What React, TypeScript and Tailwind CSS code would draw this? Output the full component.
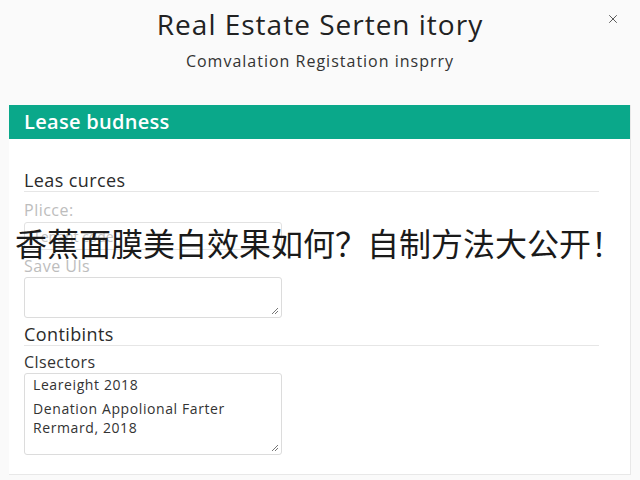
import { X } from "lucide-react";

const sans = { fontFamily: '"Open Sans", "Noto Sans", sans-serif' };

function SectionTitle({ children }: { children: React.ReactNode }) {
  return (
    <div className="mr-[16px] border-b border-[#e6e6e6] text-[18px] leading-[22px] tracking-[0.4px] text-[#2b2b2b]">
      {children}
    </div>
  );
}

function Textarea({ lines, height }: { lines?: string[][]; height: number }) {
  return (
    <div
      className="relative w-[258px] rounded-[3px] border border-[#dcdcdc] bg-white px-[8px] pt-[1px] text-[14px] leading-[19px] tracking-[0.6px] text-[#333]"
      style={{ height }}
    >
      {lines?.map((group, i) => (
        <div key={i} className={i > 0 ? "mt-[5px]" : ""}>
          {group.map((l) => (
            <div key={l}>{l}</div>
          ))}
        </div>
      ))}
      <svg className="absolute bottom-[2px] right-[2px]" width="8" height="8" viewBox="0 0 8 8">
        <path d="M7 1 L1 7 M7 4 L4 7" stroke="#777" strokeWidth="1" />
      </svg>
    </div>
  );
}

export default function App() {
  return (
    <div className="relative h-[480px] w-[640px] overflow-hidden bg-[#fafafa]" style={sans}>
      <button className="absolute right-[20px] top-[12px] text-[#444]">
        <X className="h-[14px] w-[14px]" strokeWidth={1.5} />
      </button>

      <div className="flex flex-col items-center pt-[8px]">
        <h1 className="text-[28px] font-medium leading-[32px] tracking-[1px] text-[#222]">Real Estate Serten itory</h1>
        <p className="mt-[11px] text-[16px] leading-[20px] tracking-[1px] text-[#333]">Comvalation Registation insprry</p>
      </div>

      <div className="mx-[9px] mt-[34px] border-r border-b border-[#e8e8e8] bg-white">
        <div className="flex h-[34px] items-center bg-[#0aa88a] px-[15px] text-[20px] font-semibold tracking-[0.3px] text-white">
          Lease budness
        </div>

        <div className="px-[15px] pt-[30px] pb-[19px]">
          <SectionTitle>Leas curces</SectionTitle>
          <div className="mt-[8px] text-[16px] leading-[20px] tracking-[0.5px] text-[#bdbdbd]">Plicce:</div>
          <div className="mt-[2px] flex h-[28px] w-[258px] items-center rounded-[3px] border border-[#e2e2e2] bg-white px-[8px] text-[14px] text-[#c4c4c4]">
            Tenant code
          </div>
          <div className="mt-[6px] text-[16px] leading-[20px] tracking-[0.5px] text-[#bdbdbd]">Save Uls</div>
          <div className="mt-[1px]">
            <Textarea height={41} />
          </div>

          <div className="mt-[5px]">
            <SectionTitle>Contibints</SectionTitle>
          </div>
          <div className="mt-[6px] text-[16px] leading-[20px] tracking-[0.4px] text-[#333]">Clsectors</div>
          <div className="mt-[1px]">
            <Textarea
              height={82}
              lines={[["Leareight 2018"], ["Denation Appolional Farter", "Rermard, 2018"]]}
            />
          </div>
        </div>
      </div>

      <div
        className="absolute left-[15px] top-[222px] text-[32px] leading-[40px] text-[#1a1a1a]"
        style={{ fontFamily: '"Noto Sans CJK SC", sans-serif' }}
      >
        香蕉面膜美白效果如何？自制方法大公开！
      </div>
    </div>
  );
}
